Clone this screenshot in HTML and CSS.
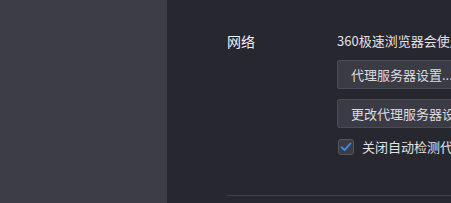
FILE: index.html
```html
<!DOCTYPE html>
<html lang="zh-CN">
<head>
    <meta charset="UTF-8">
    <title>设置 - 网络</title>
    <link rel="stylesheet" href="styles.css">
</head>
<body>

    <div class="sidebar"></div>

    <div class="main">
        <div class="section">
            <div class="section-label">网络</div>
            <div class="section-body">
                <p class="desc">360极速浏览器会使用计算机的系统代理设置连接到网络。</p>
                <button class="btn">代理服务器设置...</button>
                <button class="btn">更改代理服务器设置（仅对360极速浏览器生效）</button>
                <label class="check-row">
                    <span class="checkbox">
                        <svg width="12" height="10" viewBox="0 0 12 10">
                            <path d="M1.5 5.2 L4.5 8.2 L10.5 1.5" fill="none" stroke="#3b8ef0" stroke-width="1.8" stroke-linecap="round" stroke-linejoin="round"/>
                        </svg>
                    </span>
                    关闭自动检测代理设置
                </label>
            </div>
        </div>
        <div class="divider"></div>
    </div>

</body>
</html>
```

FILE: styles.css
```css
html, body {
    margin: 0;
    height: 100%;
    overflow: hidden;
}

body {
    display: flex;
    background: #272730;
    font-family: "Noto Sans CJK SC", "Noto Sans", sans-serif;
    font-size: 13px;
    color: #e2e2e6;
}

.sidebar {
    width: 167px;
    flex-shrink: 0;
    background: #3c3d47;
}

.main {
    flex: 1;
    min-width: 0;
    padding: 31px 0 0 60px;
    white-space: nowrap;
}

.section {
    display: flex;
    height: 164px;
}

.section-label {
    width: 110px;
    flex-shrink: 0;
    font-size: 14px;
    line-height: 20px;
    color: #f0f0f2;
}

.section-body {
    display: flex;
    flex-direction: column;
    align-items: flex-start;
}

.desc {
    margin: 0;
    line-height: 20px;
}

.btn {
    height: 29px;
    margin-top: 9px;
    padding: 0 13px;
    background: #3a3b44;
    border: 1px solid #4a4b54;
    border-radius: 2px;
    color: #dcdce0;
    font-family: inherit;
    font-size: 13px;
    white-space: nowrap;
}

.btn + .btn {
    margin-top: 10px;
}

.check-row {
    display: flex;
    align-items: center;
    gap: 8px;
    margin-top: 11px;
    margin-left: 1px;
    line-height: 16px;
}

.checkbox {
    width: 14px;
    height: 14px;
    display: flex;
    align-items: center;
    justify-content: center;
    background: #3a3b44;
    border: 1px solid #53545e;
    border-radius: 3px;
}

.divider {
    height: 1px;
    background: #3d3e48;
}
```
